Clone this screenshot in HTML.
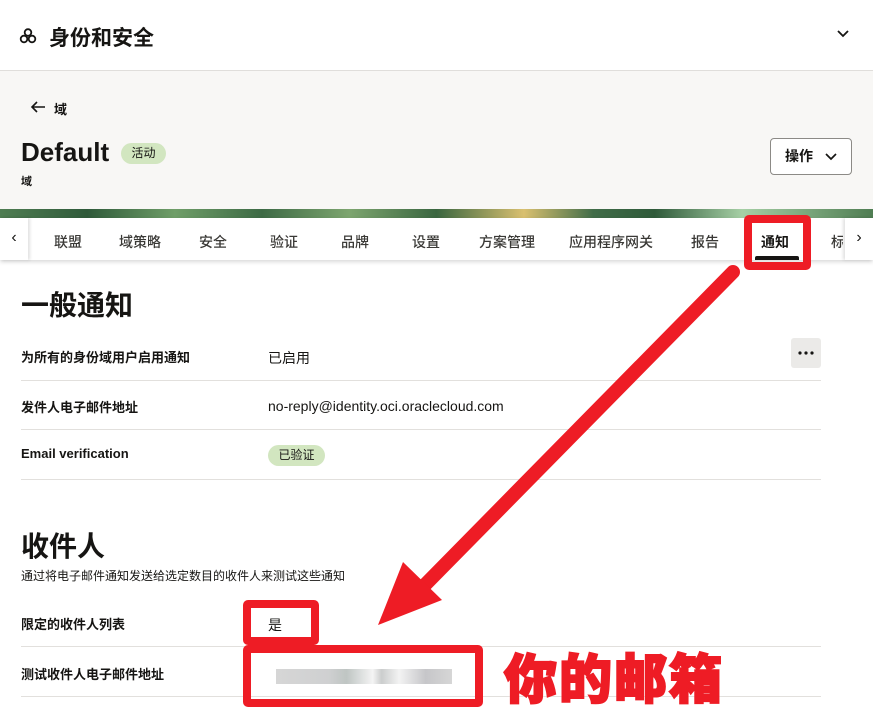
<!DOCTYPE html>
<html><head><meta charset="utf-8"><style>
*{margin:0;padding:0;box-sizing:border-box}
body{width:873px;height:722px;overflow:hidden;background:#fff;font-family:"Liberation Sans","Noto Sans CJK SC",sans-serif;color:#161513;position:relative}
.a{position:absolute}
.hdr{left:0;top:0;width:873px;height:71px;border-bottom:1px solid #e0dedb;background:#fff}
.gray{left:0;top:71px;width:873px;height:139px;background:#f8f7f5}
.banner{left:0;top:209px;width:873px;height:10px;background:linear-gradient(90deg,#4f7d52,#2f5a3a 10%,#6f9e68 20%,#3d6a45 30%,#7da56f 40%,#3a6640 50%,#d9c070 60%,#406c48 68%,#2f5a3a 75%,#a6cfa5 85%,#4f7d52)}
.tabs{left:0;top:218px;width:873px;height:42px;background:#fff;box-shadow:0 2px 4px rgba(0,0,0,.15)}
.tab{top:232px;font-size:14px;color:#3a3936;font-weight:500}
.row{left:21px;width:800px;border-bottom:1px solid #e2e0dd}
.lbl{font-size:13px;font-weight:bold}
.val{font-size:14px}
.red{border:8px solid #ee1c25;border-radius:5px}
</style></head><body>
<div class="a hdr"></div>
<svg class="a" style="left:19px;top:28px" width="18" height="16" viewBox="0 0 18 16" fill="none" stroke="#161513" stroke-width="1.8"><circle cx="9" cy="4.5" r="3.3"/><circle cx="5" cy="11" r="3.3"/><circle cx="13" cy="11" r="3.3"/></svg>
<div class="a" style="left:49px;top:22px;font-size:21px;font-weight:bold">身份和安全</div>
<svg class="a" style="left:836px;top:29px" width="14" height="10" viewBox="0 0 14 10"><path d="M2 2l5 5 5-5" fill="none" stroke="#161513" stroke-width="1.8"/></svg>
<div class="a gray"></div>
<svg class="a" style="left:29px;top:100px" width="18" height="14" viewBox="0 0 18 14"><path d="M16 7H3M8 2L3 7l5 5" fill="none" stroke="#161513" stroke-width="1.6"/></svg>
<div class="a" style="left:54px;top:99px;font-size:13px;font-weight:bold">域</div>
<div class="a" style="left:21px;top:137px;font-size:26px;font-weight:bold">Default</div>
<div class="a" style="left:121px;top:143px;width:45px;height:21px;border-radius:11px;background:#d2e6c0;font-size:12px;text-align:center;line-height:21px">活动</div>
<div class="a" style="left:21px;top:173px;font-size:11px;font-weight:bold">域</div>
<div class="a" style="left:770px;top:138px;width:82px;height:37px;border:1px solid #8c8a86;border-radius:4px;background:#fff;font-size:14px;font-weight:bold;line-height:35px;padding-left:14px">操作<svg style="position:absolute;left:54px;top:14px" width="12" height="8" viewBox="0 0 12 8"><path d="M1 1l5 5 5-5" fill="none" stroke="#161513" stroke-width="1.7"/></svg></div>
<div class="a banner"></div>
<div class="a tabs"></div>
<div class="a" style="left:0;top:218px;width:28px;height:42px;box-shadow:2px 0 3px rgba(0,0,0,.12);background:#fff;font-size:16px;text-align:center;line-height:40px">‹</div>
<div class="a" style="left:845px;top:218px;width:28px;height:42px;box-shadow:-2px 0 3px rgba(0,0,0,.12);background:#fff;font-size:16px;text-align:center;line-height:40px">›</div>
<div class="a tab" style="left:54px">联盟</div>
<div class="a tab" style="left:119px">域策略</div>
<div class="a tab" style="left:199px">安全</div>
<div class="a tab" style="left:270px">验证</div>
<div class="a tab" style="left:341px">品牌</div>
<div class="a tab" style="left:412px">设置</div>
<div class="a tab" style="left:479px">方案管理</div>
<div class="a tab" style="left:569px">应用程序网关</div>
<div class="a tab" style="left:691px">报告</div>
<div class="a tab" style="left:761px;font-weight:bold;color:#161513">通知</div>
<div class="a tab" style="left:831px;width:12px;overflow:hidden">标</div>
<div class="a" style="left:755px;top:256px;width:44px;height:4px;background:#161513;border-radius:2px 2px 0 0"></div>
<div class="a" style="left:21px;top:284px;font-size:28px;font-weight:bold">一般通知</div>
<div class="a row" style="top:331px;height:50px"></div>
<div class="a lbl" style="left:21px;top:347px">为所有的身份域用户启用通知</div>
<div class="a val" style="left:268px;top:348px">已启用</div>
<div class="a" style="left:791px;top:338px;width:30px;height:30px;background:#ebeae8;border-radius:3px"><svg width="30" height="30"><circle cx="9" cy="15" r="1.6" fill="#161513"/><circle cx="15" cy="15" r="1.6" fill="#161513"/><circle cx="21" cy="15" r="1.6" fill="#161513"/></svg></div>
<div class="a row" style="top:381px;height:49px"></div>
<div class="a lbl" style="left:21px;top:397px">发件人电子邮件地址</div>
<div class="a val" style="left:268px;top:398px">no-reply@identity.oci.oraclecloud.com</div>
<div class="a row" style="top:430px;height:50px"></div>
<div class="a lbl" style="left:21px;top:446px">Email verification</div>
<div class="a" style="left:268px;top:445px;width:57px;height:21px;border-radius:11px;background:#d2e6c0;font-size:12px;text-align:center;line-height:21px">已验证</div>
<div class="a" style="left:21px;top:525px;font-size:28px;font-weight:bold">收件人</div>
<div class="a" style="left:21px;top:567px;font-size:12px">通过将电子邮件通知发送给选定数目的收件人来测试这些通知</div>
<div class="a row" style="top:597px;height:50px"></div>
<div class="a lbl" style="left:21px;top:614px">限定的收件人列表</div>
<div class="a val" style="left:268px;top:615px">是</div>
<div class="a row" style="top:647px;height:50px"></div>
<div class="a lbl" style="left:21px;top:664px">测试收件人电子邮件地址</div>
<div class="a" style="left:276px;top:669px;width:176px;height:15px;background:linear-gradient(90deg,#d6d6d6,#cfd0d1 30%,#bfc5c3 40%,#f4f4f4 55%,#cbcdcd 60%,#f3f3f3 70%,#c6c6c9 85%,#d6d6d6)"></div>
<div class="a red" style="left:744px;top:215px;width:67px;height:55px"></div>
<div class="a red" style="left:243px;top:600px;width:76px;height:45px"></div>
<div class="a red" style="left:243px;top:645px;width:240px;height:62px"></div>
<svg class="a" style="left:0;top:0" width="873" height="722"><line x1="733" y1="272" x2="415" y2="595" stroke="#ee1c25" stroke-width="14" stroke-linecap="round"/><polygon points="378,625 403,562 442,600" fill="#ee1c25"/></svg>
<div class="a" style="left:504px;top:638px;font-size:53px;font-weight:900;color:#ee1c25;letter-spacing:2px;-webkit-text-stroke:2px #ee1c25;text-shadow:0 0 3px #fff">你的邮箱</div>
</body></html>
